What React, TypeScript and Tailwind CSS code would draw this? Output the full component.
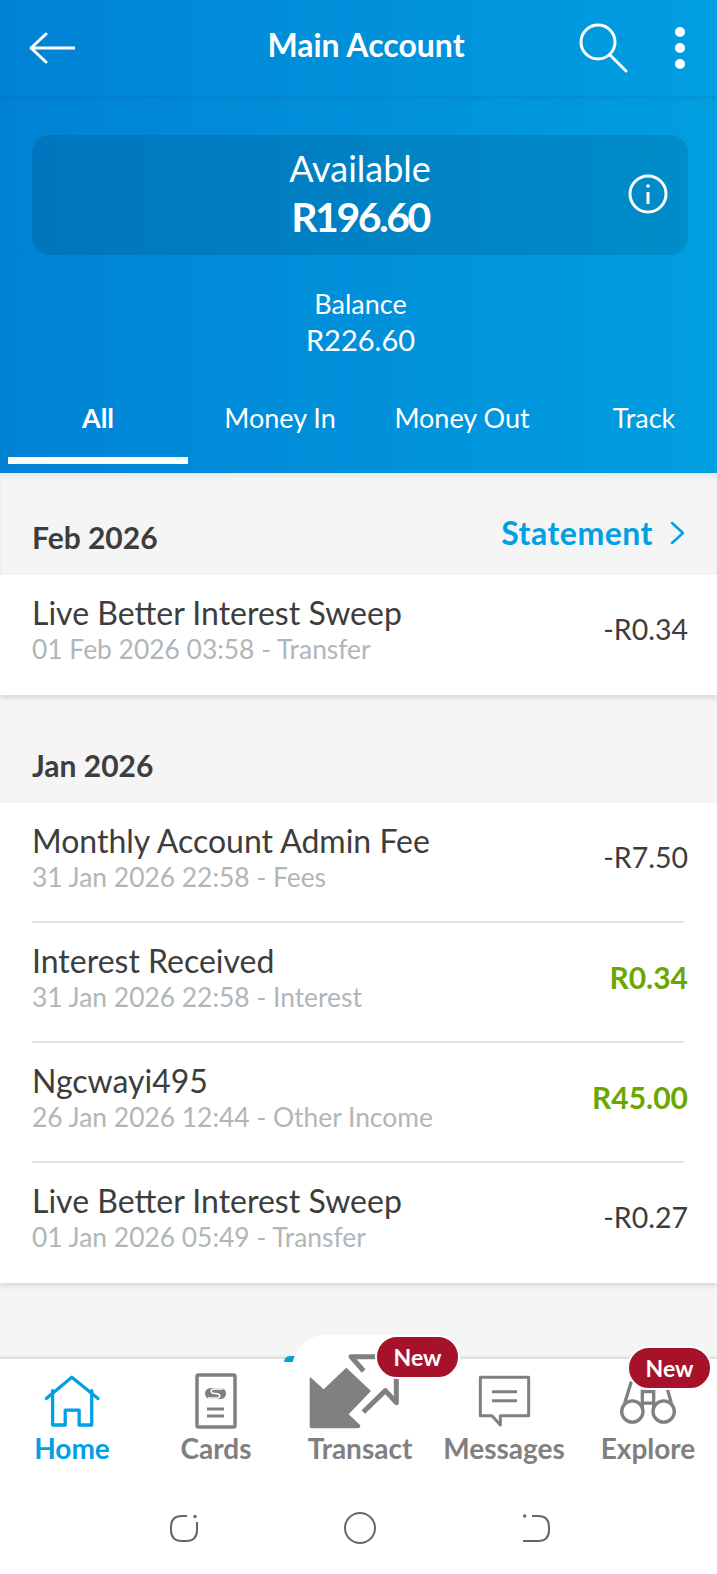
import React from 'react';

type Tx = { title: string; sub: string; amount: string; credit?: boolean };

const febTx: Tx[] = [
  { title: 'Live Better Interest Sweep', sub: '01 Feb 2026 03:58 - Transfer', amount: '-R0.34' },
];

const janTx: Tx[] = [
  { title: 'Monthly Account Admin Fee', sub: '31 Jan 2026 22:58 - Fees', amount: '-R7.50' },
  { title: 'Interest Received', sub: '31 Jan 2026 22:58 - Interest', amount: 'R0.34', credit: true },
  { title: 'Ngcwayi495', sub: '26 Jan 2026 12:44 - Other Income', amount: 'R45.00', credit: true },
  { title: 'Live Better Interest Sweep', sub: '01 Jan 2026 05:49 - Transfer', amount: '-R0.27' },
];

const tabs = ['All', 'Money In', 'Money Out', 'Track'];

function TxRow({ tx }: { tx: Tx }) {
  return (
    <div className="h-[118px] ml-8 mr-[29px] flex items-center justify-between">
      <div className="pb-[6px]">
        <div className="text-[32px] leading-[36px] text-[#3d3d3d]">{tx.title}</div>
        <div className="text-[26.4px] leading-[36px] text-[#b0b6ba]">{tx.sub}</div>
      </div>
      <div className={tx.credit ? 'pb-[10px] text-[30px] font-bold text-[#6aa800]' : 'pb-[10px] text-[28.5px] text-[#3d3d3d]'}>{tx.amount}</div>
    </div>
  );
}

function TxCard({ items }: { items: Tx[] }) {
  return (
    <div className="bg-white shadow-[0_3px_5px_rgba(0,0,0,0.12)]">
      {items.map((tx, i) => (
        <div key={i}>
          <TxRow tx={tx} />
          {i < items.length - 1 ? <div className="ml-8 mr-[33px] h-[2px] bg-[#e2e4e5]" /> : <div className="h-[2px]" />}
        </div>
      ))}
    </div>
  );
}

function NewBadge({ className }: { className: string }) {
  return (
    <span className={`absolute w-[85px] h-[44px] flex items-center justify-center bg-[#a6122a] text-white text-[23px] font-bold rounded-full border-2 border-white ${className}`}>
      New
    </span>
  );
}

function NavItem({ label, active, icon, badge }: { label: string; active?: boolean; icon: React.ReactNode; badge?: React.ReactNode }) {
  return (
    <div className="relative flex flex-col items-center">
      <div className="h-[72px] flex items-end justify-center">{icon}</div>
      <div className={`text-[28px] leading-[34px] font-bold whitespace-nowrap ${active ? 'text-[#00a0e3]' : 'text-[#808080]'}`}>{label}</div>
      {badge}
    </div>
  );
}

export default function App() {
  return (
    <div className="w-[717px] h-[1574px] bg-[#f5f5f5] relative overflow-hidden flex flex-col font-['Lato','Noto_Sans',sans-serif]">
      {/* Blue top part */}
      <div className="relative bg-gradient-to-r from-[#0082d4] to-[#009ee0] text-white h-[473px] overflow-hidden shrink-0">
        <div className="h-[96px] flex items-center pl-[29px] pr-[32px] shadow-[0_2px_3px_rgba(0,0,0,0.08)]">
          <svg width="46" height="32" viewBox="0 0 46 32" fill="none" stroke="white" strokeWidth="3" strokeLinecap="round" strokeLinejoin="round">
            <path d="M2 16H45M17 2L2 16L17 30" />
          </svg>
          <div className="flex-1 text-center text-[32px] font-bold pl-[78px] pb-[6px]">Main Account</div>
          <svg width="50" height="50" viewBox="0 0 50 50" fill="none" stroke="white" strokeWidth="3" strokeLinecap="round">
            <ellipse cx="19" cy="19" rx="17" ry="17" />
            <path d="M31 32L47 48" />
          </svg>
          <div className="ml-[46px] flex flex-col gap-[6px]">
            <span className="w-[10px] h-[10px] rounded-full bg-white" />
            <span className="w-[10px] h-[10px] rounded-full bg-white" />
            <span className="w-[10px] h-[10px] rounded-full bg-white" />
          </div>
        </div>

        <div className="mt-[39px] ml-8 mr-[29px] h-[120px] rounded-[18px] bg-black/10 relative flex flex-col items-center justify-center pb-[3px]">
          <div className="text-[36px] leading-[46px]">Available</div>
          <div className="text-[41px] leading-[52px] font-bold tracking-[-2.5px]">R196.60</div>
          <svg className="absolute right-[20px] top-[39px]" width="40" height="40" viewBox="0 0 40 40" fill="none" stroke="white" strokeWidth="3">
            <circle cx="20" cy="20" r="18" />
            <path d="M20 18V30" />
            <circle cx="20" cy="12" r="1.8" fill="white" stroke="none" />
          </svg>
        </div>

        <div className="mt-[31px] ml-1 text-center">
          <div className="text-[27px] leading-[36px]">Balance</div>
          <div className="text-[29px] leading-[36px]">R226.60</div>
        </div>

        <div className="mt-[40px] pl-2 flex gap-[2px]">
          {tabs.map((t, i) => (
            <div key={t} className="w-[180px] shrink-0 flex flex-col items-center">
              <div className={`h-[40px] leading-[40px] text-[27px] ${i === 0 ? 'font-bold' : ''}`}>{t}</div>
              <div className={`mt-[19px] w-full h-[7px] ${i === 0 ? 'bg-white' : ''}`} />
            </div>
          ))}
        </div>
      </div>

      {/* Transactions */}
      <div className="h-[102px] pl-8 pr-[32px] pb-[18px] flex items-end justify-between shadow-[inset_0_4px_4px_rgba(0,0,0,0.05)]">
        <div className="text-[30px] leading-[40px] font-bold text-[#3d3d3d]">Feb 2026</div>
        <div className="flex items-center gap-[17px] pb-[4px] text-[#00a0e3]">
          <span className="text-[32px] leading-[40px] font-bold tracking-[0.5px]">Statement</span>
          <svg width="15" height="24" viewBox="0 0 15 24" fill="none" stroke="#00a0e3" strokeWidth="2.5" strokeLinecap="round" strokeLinejoin="round">
            <path d="M2 2L13 12L2 22" />
          </svg>
        </div>
      </div>
      <TxCard items={febTx} />

      <div className="h-[108px] pl-8 pb-[18px] flex items-end">
        <div className="text-[30px] leading-[40px] font-bold text-[#3d3d3d]">Jan 2026</div>
      </div>
      <TxCard items={janTx} />

      <div className="flex-1" />

      {/* Bottom navigation */}
      <div className="relative bg-white h-[215px] shadow-[0_-2px_3px_rgba(0,0,0,0.12)]">
        <span className="absolute left-[284px] -top-[3px] w-[20px] h-[6px] rounded-tl-[10px] bg-[#00a0e3]" />
        <span className="absolute left-[292px] -top-[24px] w-[136px] h-[40px] rounded-t-[34px] bg-white" />
        <div className="relative grid grid-cols-[repeat(5,144px)]">
          <NavItem
            label="Home"
            active
            icon={
              <svg className="mb-[2px]" width="61" height="55" viewBox="125 222 184 166" fill="none" stroke="#00a0e3" strokeWidth="10" strokeLinecap="round" strokeLinejoin="round">
                <path d="M138 296L215 232L294 296M157 272V376H195V331H237V376H275V272" />
              </svg>
            }
          />
          <NavItem
            label="Cards"
            icon={
              <svg className="mb-[2px]" width="42" height="56" viewBox="0 0 42 56" fill="none">
                <rect x="2" y="2" width="38" height="52" rx="1.5" stroke="#808080" strokeWidth="3.5" />
                <rect x="10" y="15" width="21" height="11" rx="5.5" fill="#808080" />
                <path d="M28 16H19C15 16 15 20.5 20 20.5C26 20.5 26 25 22 25H13" stroke="white" strokeWidth="1.5" />
                <path d="M12 36H29M12 43H29" stroke="#808080" strokeWidth="3" />
              </svg>
            }
          />
          <NavItem
            label="Transact"
            icon={
              <svg className="mr-3" width="95" height="80" viewBox="80 95 285 240">
                <path d="M92 175L130 210L198 145L272 215L205 285L240 318Q240 327 232 327H96Q88 327 88 319V179Q88 172 92 175Z" fill="#808080" />
                <path d="M250 155L212 112H348V250L315 214L249 278" fill="none" stroke="#808080" strokeWidth="15" strokeLinejoin="round" />
              </svg>
            }
            badge={<NewBadge className="left-[87px] -top-[24px]" />}
          />
          <NavItem
            label="Messages"
            icon={
              <svg className="mb-[2px]" width="55" height="55" viewBox="350 222 165 165" fill="none" stroke="#808080" strokeWidth="9" strokeLinejoin="round">
                <path d="M360 232H505V347H420V375L395 347H360Z" />
                <path d="M395 275H470M395 302H470" />
              </svg>
            }
          />
          <NavItem
            label="Explore"
            icon={
              <svg className="mb-[6px]" width="60" height="52" viewBox="85 100 180 155" fill="none" stroke="#808080" strokeWidth="10">
                <circle cx="128" cy="215" r="32" />
                <circle cx="222" cy="215" r="32" />
                <path d="M158 205V155H192V205M160 190H190M105 190L125 125M245 190L228 130" />
              </svg>
            }
            badge={<NewBadge className="left-[51px] -top-[13px]" />}
          />
        </div>

        {/* System buttons */}
        <div className="mt-[47px] pl-[169px] flex items-center">
          <svg width="30" height="29" viewBox="0 0 30 29" fill="none" stroke="#666666" strokeWidth="2">
            <path d="M18 2H13Q2 2 2 13V16Q2 27 13 27H17Q28 27 28 16V8" />
            <circle cx="26" cy="2.5" r="1.7" fill="#666666" stroke="none" />
          </svg>
          <svg className="ml-[145px]" width="32" height="32" viewBox="0 0 32 32" fill="none" stroke="#666666" strokeWidth="2">
            <circle cx="16" cy="16" r="15" />
          </svg>
          <svg className="ml-[147px]" width="28" height="29" viewBox="0 0 28 29" fill="none" stroke="#666666" strokeWidth="2">
            <path d="M9 2H15Q26 2 26 13V16Q26 27 15 27H0" />
            <circle cx="1.7" cy="2" r="1.7" fill="#666666" stroke="none" />
          </svg>
        </div>
      </div>
    </div>
  );
}
